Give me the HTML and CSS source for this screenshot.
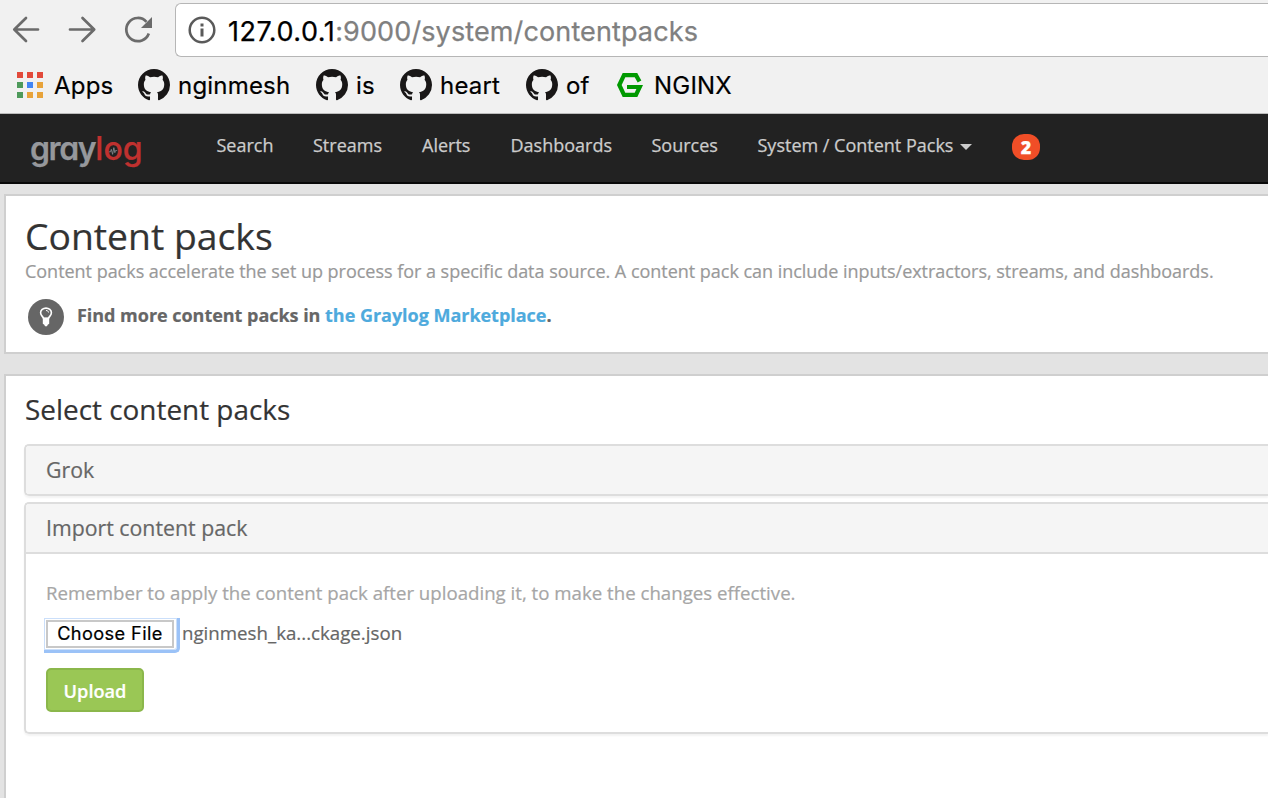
FILE: index.html
```html
<!DOCTYPE html>
<html lang="en">
<head>
<meta charset="utf-8">
<title>Graylog - Content packs</title>
<link rel="stylesheet" href="styles.css">
</head>
<body>
<svg class="defs" width="0" height="0" aria-hidden="true">
  <symbol id="octocat" viewBox="0 0 16 16"><path fill="#191717" d="M8 0C3.58 0 0 3.58 0 8c0 3.54 2.29 6.53 5.47 7.59.4.07.55-.17.55-.38 0-.19-.01-.82-.01-1.49-2.01.37-2.53-.49-2.69-.94-.09-.23-.48-.94-.82-1.13-.28-.15-.68-.52-.01-.53.63-.01 1.08.58 1.23.82.72 1.21 1.87.87 2.33.66.07-.52.28-.87.51-1.07-1.78-.2-3.64-.89-3.64-3.95 0-.87.31-1.59.82-2.15-.08-.2-.36-1.02.08-2.12 0 0 .67-.21 2.2.82.64-.18 1.32-.27 2-.27s1.36.09 2 .27c1.53-1.04 2.2-.82 2.2-.82.44 1.1.16 1.92.08 2.12.51.56.82 1.27.82 2.15 0 3.07-1.87 3.75-3.65 3.95.29.25.54.73.54 1.48 0 1.07-.01 1.93-.01 2.2 0 .21.15.46.55.38A8.01 8.01 0 0 0 16 8c0-4.42-3.58-8-8-8z"/></symbol>
</svg>
<div class="browser">
  <div class="toolbar">
    <svg class="controls" width="150" height="40" viewBox="0 0 150 40" fill="none" stroke="#6b6b6b" stroke-width="2.7">
      <path stroke-linecap="round" stroke-linejoin="round" d="M38 19.5H14.5M26 8L14.3 19.5L26 31"/>
      <path stroke-linecap="round" stroke-linejoin="round" d="M70 19.5H94M82.500 8L94.200 19.500L82.500 31"/>
      <path d="M148.800 23.500A11.600 11.600 0 1 1 146.500 11.800"/>
      <path stroke="none" fill="#6b6b6b" d="M152 7v11h-11z"/>
    </svg>
    <div class="address">
      <svg width="28" height="28" viewBox="0 0 28 28"><circle cx="14" cy="14" r="12.300" fill="none" stroke="#5a5a5a" stroke-width="2.500"/><path fill="#5a5a5a" d="M12.500 7.500h3v3h-3zM12.500 12.500h3v8h-3z"/></svg>
      <span class="url"><span class="host">127.0.0.1</span>:9000/system/contentpacks</span>
    </div>
  </div>
  <div class="bookmarks">
    <a class="bm b-apps"><svg width="26" height="26" viewBox="0 0 26 26"><path fill="#e24a3b" d="M0 0h6v6H0zM10 0h6v6h-6zM20 0h6v6h-6z"/><path fill="#4e9a5b" d="M0 10h6v6H0zM0 20h6v6H0z"/><path fill="#4285f4" d="M10 10h6v6h-6z"/><path fill="#e8a33a" d="M20 10h6v6h-6zM10 20h6v6h-6zM20 20h6v6h-6z"/></svg><span>Apps</span></a>
    <a class="bm b-ngin"><svg width="32" height="32"><use href="#octocat"/></svg><span>nginmesh</span></a>
    <a class="bm b-is"><svg width="32" height="32"><use href="#octocat"/></svg><span>is</span></a>
    <a class="bm b-heart"><svg width="32" height="32"><use href="#octocat"/></svg><span>heart</span></a>
    <a class="bm b-of"><svg width="32" height="32"><use href="#octocat"/></svg><span>of</span></a>
    <a class="bm b-nginx"><svg width="26" height="24" viewBox="0 0 26 24"><path fill="none" stroke="#090" stroke-width="4.200" d="M22.500 8.500L19 2.200H7L2.300 12L7 21.800H19L22.700 14H10"/></svg><span>NGINX</span></a>
  </div>
</div>
<nav class="navbar">
  <a class="logo"><span class="gray">gray</span><span class="log">log</span><svg class="pulse" width="10" height="12" viewBox="0 0 12 12"><path fill="none" stroke="#888b90" stroke-width="1" d="M1 7h2l1-3 1.500 6L7 2l1.200 6L9 5.500h2"/></svg></a>
  <a class="n n-search">Search</a>
  <a class="n n-streams">Streams</a>
  <a class="n n-alerts">Alerts</a>
  <a class="n n-dash">Dashboards</a>
  <a class="n n-sources">Sources</a>
  <a class="n n-system">System / Content Packs</a><i class="caret"></i>
  <span class="badge">2</span>
</nav>
<main class="page">
  <section class="card intro">
    <h1>Content packs</h1>
    <p class="lead">Content packs accelerate the set up process for a specific data source. A content pack can include inputs/extractors, streams, and dashboards.</p>
    <div class="tip">
      <svg width="36" height="36" viewBox="0 0 36 36"><circle cx="18" cy="18" r="18" fill="#666"/><path fill="none" stroke="#fff" stroke-width="1.600" d="M15.600 19.500C15 17.500 12.600 16.500 12.600 13.800a5.400 4.700 0 0 1 10.800 0C23.400 16.500 21 17.500 20.400 19.500z"/><path fill="none" stroke="#fff" d="M18 11.500c1.500 0 2.500.8 2.500 2"/><path fill="#fff" d="M14.800 18.500h6.400v6.200l-1.500 1-.7 1.500h-2l-.7-1.500-1.500-1z"/></svg>
      <p class="find">Find more content packs in <a>the Graylog Marketplace</a>.</p>
    </div>
  </section>
  <section class="card select">
    <h2>Select content packs</h2>
    <div class="panel"><div class="head"><span>Grok</span></div></div>
    <div class="panel">
      <div class="head open"><span>Import content pack</span></div>
      <div class="body">
        <p class="hint">Remember to apply the content pack after uploading it, to make the changes effective.</p>
        <div class="file"><div class="focus"><button class="choose">Choose File</button></div><span class="fname">nginmesh_ka...ckage.json</span></div>
        <button class="upload">Upload</button>
      </div>
    </div>
  </section>
</main>
</body>
</html>
```
FILE: styles.css
```css
* { box-sizing: border-box; }
body { margin: 0; height: 798px; overflow: hidden; background: #e3e3e3; color: #666; font-family: "Open Sans", sans-serif; font-size: 18px; display: flex; flex-direction: column; }
h1, h2, p { margin: 0; font-weight: 400; }
h1, h2, p, a, span, button { white-space: nowrap; }
.defs { position: absolute; }
svg { display: block; flex: none; overflow: visible; }

.browser { height: 114px; flex: none; background: #f1f1f1; border-bottom: 1px solid #bcbcbc; font-family: Inter, sans-serif; }
.toolbar { display: flex; height: 57px; padding-top: 3px; }
.controls { margin-top: 7px; }
.address { display: flex; align-items: center; flex: 1; margin-left: 25px; padding-left: 12px; height: 54px; background: #fff; border: 1px solid #b6b6b6; border-right: 0; border-radius: 6px 0 0 6px; }
.url { margin: 2px 0 0 12px; font-size: 27px; letter-spacing: .12px; color: #808080; -webkit-text-stroke: .25px; }
.host { color: #000; letter-spacing: .5px; }
.bookmarks { display: flex; height: 56px; color: #000; font-size: 24px; padding-left: 17px; letter-spacing: .2px; -webkit-text-stroke: .2px; }
.bm { display: flex; align-items: center; flex: none; }
.bm svg { margin-top: -1px; }
.b-apps { width: 121px; gap: 11px; }
.b-ngin { width: 178px; gap: 8px; }
.b-is { width: 84px; gap: 8px; }
.b-heart { width: 126px; gap: 8px; }
.b-of { width: 91px; gap: 8px; }
.b-nginx { gap: 11px; }

.navbar { display: flex; height: 70px; flex: none; background: #222; border-bottom: 2px solid #080808; padding-left: 30px; color: #ccc; -webkit-text-stroke: .25px; }
.logo { position: relative; width: 186.500px; flex: none; font: 600 32px/38px Inter, sans-serif; font-feature-settings: "cv11"; padding-top: 16px; }
.gray { color: #96989c; letter-spacing: -1.400px; }
.log { color: #c0312f; font-weight: 500; letter-spacing: .1px; }
.pulse { position: absolute; left: 77.500px; top: 31px; }
.n { line-height: 62px; flex: none; }
.n-search { width: 96.500px; }
.n-streams { width: 109px; }
.n-alerts { width: 88.500px; }
.n-dash { width: 141px; }
.n-sources { width: 106px; }
.n-system { width: 202.500px; }
.caret { width: 12px; height: 6px; margin-top: 30px; border: 6px solid transparent; border-top-color: #ccc; border-bottom: 0; }
.badge { width: 28px; height: 26px; margin: 20px 0 0 40px; border-radius: 12px; background: #f04e27; color: #fff; font-weight: 800; line-height: 26px; text-align: center; }

.page { flex: 1; padding: 10px 0 0 4px; -webkit-text-stroke: .2px; }
.card { background: #fff; border: 2px solid #cfcfcf; border-right: 0; padding-left: 19px; }
.intro { height: 160px; padding-top: 17px; }
h1 { color: #333; font-size: 37.300px; line-height: 45px; }
.lead { color: #999; line-height: 26px; letter-spacing: -.025px; }
.tip { display: flex; align-items: center; margin: 15px 0 0 3px; height: 36px; }
.find { font-weight: 700; margin: -4px 0 0 13px; letter-spacing: -.03px; }
.find a { color: #4eaadd; }
.select { height: 440px; margin-top: 20px; padding: 13px 0 0 18px; }
h2 { color: #333; font-size: 27.900px; line-height: 40px; margin-bottom: 15px; padding-left: 1px; }
.panel { border: 2px solid #ddd; border-right: 0; border-radius: 5px 0 0 5px; margin-bottom: 6px; box-shadow: 0 2px 2px rgba(0,0,0,.05); overflow: hidden; }
.head { height: 48px; padding-left: 20px; background: #f5f5f5; font-size: 21.300px; line-height: 48px; }
.open { height: 50px; border-bottom: 2px solid #ddd; }
.body { height: 178px; padding: 26px 0 0 18px; }
.hint { color: #a6a6a6; font-size: 18.660px; line-height: 26px; padding-left: 2px; }
.file { display: flex; align-items: flex-start; margin-top: 12px; height: 36px; }
.focus { width: 136px; height: 35px; padding: 2px 0 0 2px; border: solid #9bc2f7; border-width: 0 3px 3px 0; border-radius: 0 0 5px 0; box-shadow: inset 0 1px #cbdffa, inset 1px 0 #cbdffa, inset -1px -1px #cbdffa; }
.choose { display: block; width: 128px; height: 28px; padding: 0 0 2px; border: 2px solid #c8c8c8; outline: 0; background: #fff; color: #000; font: 18.200px/22px Inter, sans-serif; letter-spacing: .4px; }
.fname { margin-left: 2px; line-height: 30px; font-size: 18.700px; }
.upload { display: block; width: 98px; height: 44px; margin: 14px 0 0 2px; padding: 2px 0 0; border: 2px solid #8bb74b; border-radius: 5px; background: #9ac755; color: #fff; font: 600 18.200px "Open Sans", sans-serif; }
```
